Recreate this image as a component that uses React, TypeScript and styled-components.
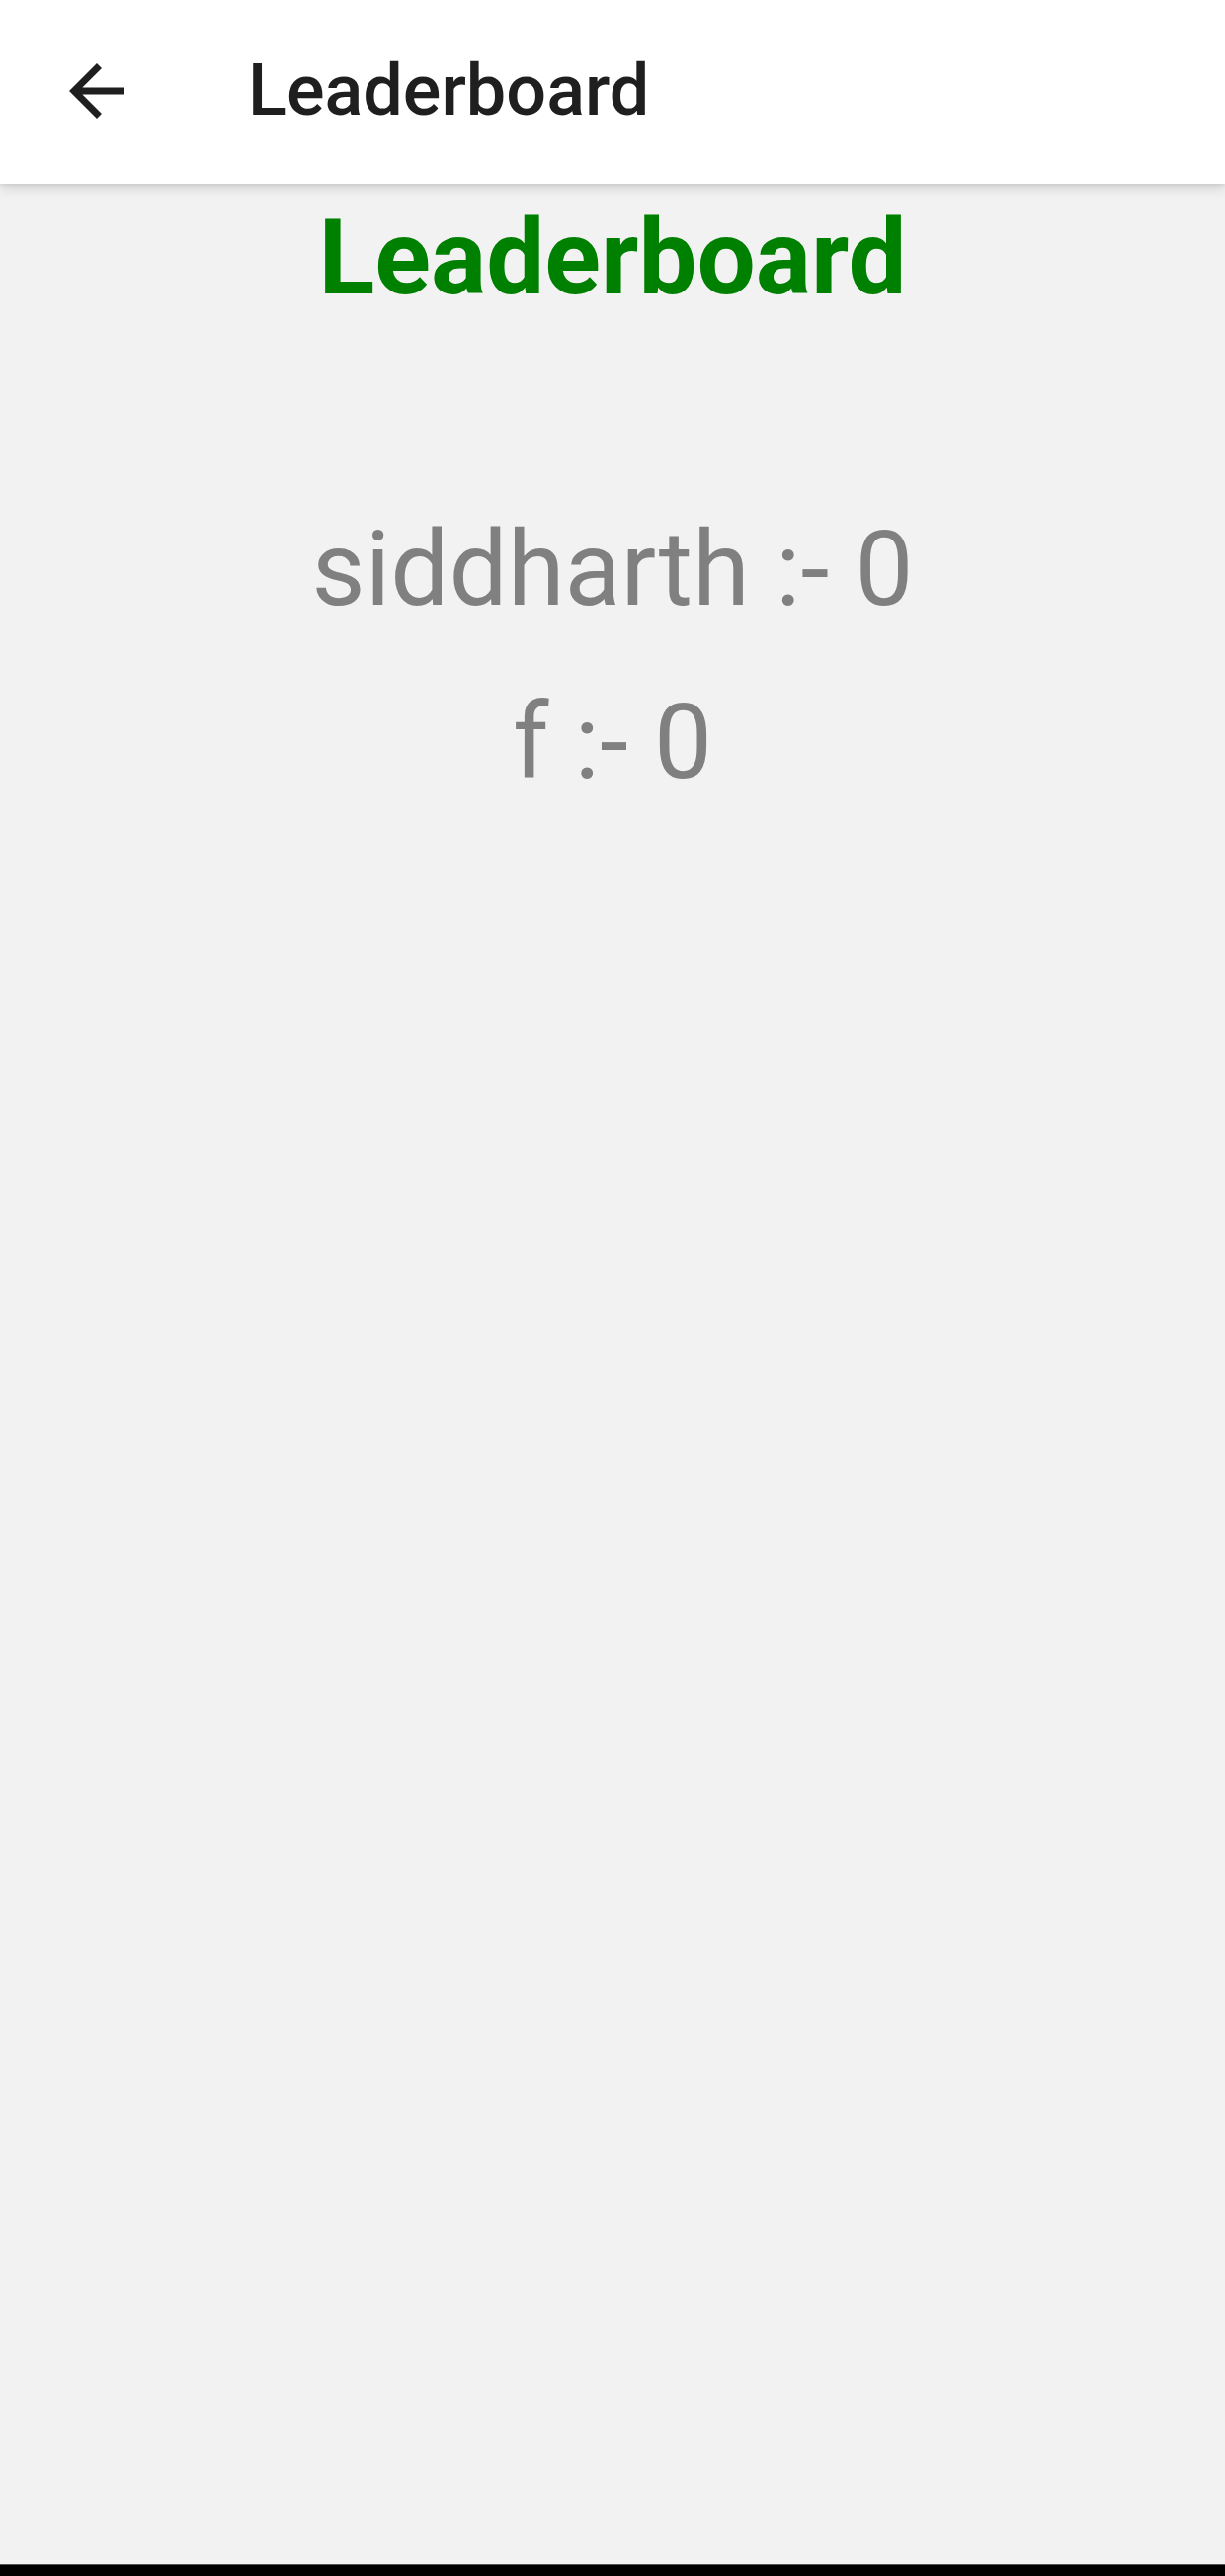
import React from "react";
import styled, { createGlobalStyle } from "styled-components";

interface Entry {
  name: string;
  score: number;
}

const entries: Entry[] = [
  { name: "siddharth", score: 0 },
  { name: "f", score: 0 },
];

const GlobalStyle = createGlobalStyle`
  html, body {
    margin: 0;
    padding: 0;
    background: #f2f2f2;
  }
  body {
    font-family: Roboto, "Noto Sans", sans-serif;
  }
`;

const App: React.FC = () => {
  return (
    <>
      <GlobalStyle />
      <Screen>
        <AppBar>
          <BackButton aria-label="Back">
            <svg width="84" height="84" viewBox="0 0 24 24">
              <path
                d="M20 11H7.83l5.59-5.59L12 4l-8 8 8 8 1.41-1.41L7.83 13H20v-2z"
                fill="#1f1f1f"
              />
            </svg>
          </BackButton>
          <AppBarTitle>Leaderboard</AppBarTitle>
        </AppBar>
        <Content>
          <Heading>Leaderboard</Heading>
          <ScoreList>
            {entries.map((item, index) => (
              <ScoreRow key={index}>{`${item.name} :- ${item.score}`}</ScoreRow>
            ))}
          </ScoreList>
        </Content>
        <NavBar />
      </Screen>
    </>
  );
};

const Screen = styled.div`
  display: flex;
  flex-direction: column;
  width: 1240px;
  height: 2607px;
  background: #f2f2f2;
  overflow: hidden;
`;

const AppBar = styled.header`
  position: relative;
  z-index: 1;
  display: flex;
  align-items: center;
  height: 186px;
  flex-shrink: 0;
  padding: 0 0 3px 56px;
  box-sizing: border-box;
  background: #ffffff;
  box-shadow: 0 4px 12px rgba(0, 0, 0, 0.14), 0 2px 3px rgba(0, 0, 0, 0.06);
`;

const BackButton = styled.div`
  display: flex;
  width: 84px;
  height: 84px;
  margin-right: 111px;
`;

const AppBarTitle = styled.div`
  font-family: Roboto, sans-serif;
  font-weight: 500;
  font-size: 72px;
  line-height: normal;
  color: #1f1f1f;
`;

const Content = styled.main`
  flex: 1;
  display: flex;
  flex-direction: column;
  align-items: center;
  padding-top: 14px;
`;

const Heading = styled.h1`
  margin: 0;
  font-family: Roboto, sans-serif;
  font-weight: 700;
  font-size: 105px;
  line-height: normal;
  color: #008000;
`;

const ScoreList = styled.div`
  display: flex;
  flex-direction: column;
  align-items: center;
  gap: 52px;
  margin-top: 192px;
`;

const ScoreRow = styled.div`
  font-family: Roboto, sans-serif;
  font-weight: 400;
  font-size: 105px;
  line-height: normal;
  color: #808080;
`;

const NavBar = styled.div`
  height: 11px;
  flex-shrink: 0;
  background: #000000;
  border-top: 1px solid #555;
`;

export default App;
